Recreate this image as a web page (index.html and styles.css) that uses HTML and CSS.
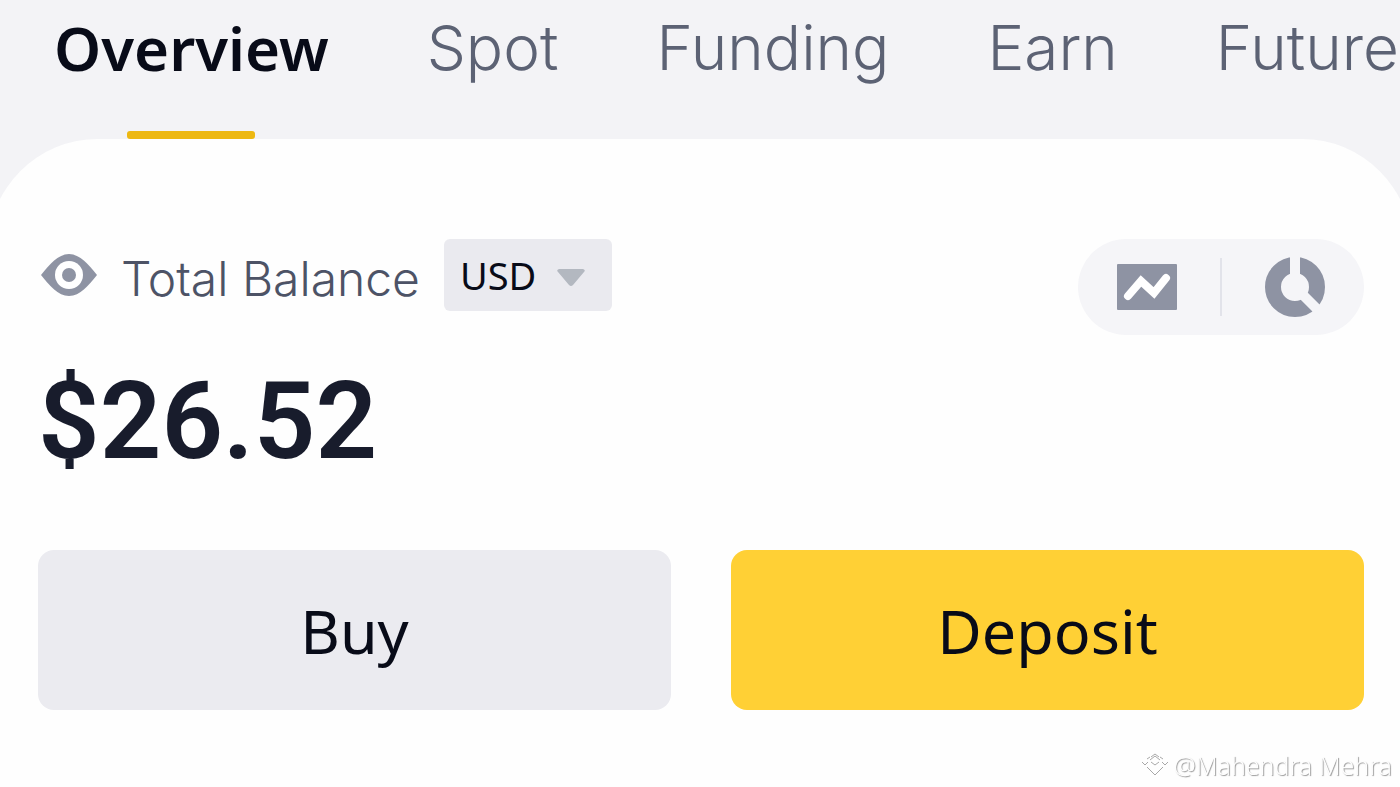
FILE: index.html
```
<!DOCTYPE html>
<html lang="en">
<head>
    <meta charset="UTF-8">
    <meta name="viewport" content="width=device-width, initial-scale=1.0">
    <title>Wallet Overview</title>
    <link rel="stylesheet" href="styles.css">
</head>
<body>
    <nav class="tabs">
        <a href="#overview" class="tab active">Overview</a>
        <a href="#spot" class="tab">Spot</a>
        <a href="#funding" class="tab">Funding</a>
        <a href="#earn" class="tab">Earn</a>
        <a href="#futures" class="tab">Futures</a>
    </nav>

    <main class="panel">
        <div class="balance-row">
            <div class="balance-label">
                <svg class="eye" viewBox="0 0 56 42" aria-hidden="true">
                    <path d="M0 21C8 11 17 0 28 0s20 11 28 21C48 31 39 42 28 42S8 31 0 21z" fill="#8e93a3"/>
                    <circle cx="28" cy="21" r="14" fill="#fff"/>
                    <circle cx="28" cy="21" r="7" fill="#8e93a3"/>
                </svg>
                <label for="currency">Total Balance</label>
                <div class="currency">
                    <select id="currency">
                        <option>USD</option>
                    </select>
                    <svg class="arrow" viewBox="0 0 28 18" aria-hidden="true">
                        <path d="M2 0h24q3 1 1 3L16 16q-2 2-4 0L1 3q-2-2 1-3z" fill="#b3b8c0"/>
                    </svg>
                </div>
            </div>
            <div class="view-switch">
                <button type="button" aria-label="Chart">
                    <svg width="60" height="60" viewBox="0 0 60 60">
                        <rect y="7" width="60" height="46" rx="1" fill="#8e93a3"/>
                        <path d="M11 39L24 24L37 36L49 21" fill="none" stroke="#fff" stroke-width="8" stroke-linecap="round"/>
                    </svg>
                </button>
                <span class="divider"></span>
                <button type="button" aria-label="Allocation">
                    <svg width="60" height="60" viewBox="0 0 60 60">
                        <circle cx="30" cy="30" r="22" fill="none" stroke="#8e93a3" stroke-width="16"/>
                        <path d="M30 30V0M30 30L52 52" fill="none" stroke="#f5f5f8" stroke-width="10"/>
                    </svg>
                </button>
            </div>
        </div>

        <div class="amount">$26.52</div>

        <div class="actions">
            <button type="button" class="btn">Buy</button>
            <button type="button" class="btn primary">Deposit</button>
        </div>
    </main>

    <div class="watermark">
        <svg width="28" height="24" viewBox="0 0 28 24" fill="none" stroke="#a8a8a8" aria-hidden="true">
            <path d="M6 6l3-2M10 4l4-3 4 3M19 4l3 2M9 7l5-4 5 4M1 9l3 3 3-3M10 9l4 3 4-3M21 9l3 3 3-3M6 14l8 8 8-8"/>
        </svg>
        <span>@Mahendra Mehra</span>
    </div>
</body>
</html>
```
FILE: styles.css
```
* {
    box-sizing: border-box;
}
body {
    margin: 0;
    min-height: 100vh;
    font-family: "Noto Sans", sans-serif;
    background-color: #f3f3f6;
    color: #080b18;
    overflow: hidden;
    display: flex;
    flex-direction: column;
}
button, select {
    font-family: inherit;
    color: inherit;
    border: none;
    cursor: pointer;
}
.tabs {
    display: flex;
    gap: 98px;
    padding-left: 54px;
}
.tab {
    position: relative;
    flex: none;
    padding: 18px 0 61px;
    font-family: Inter, sans-serif;
    font-size: 62px;
    line-height: 60px;
    font-weight: 300;
    color: #5c6274;
    text-decoration: none;
}
.tab.active {
    font-family: "Noto Sans", sans-serif;
    font-size: 60px;
    font-weight: 600;
    color: #080b18;
}
.tab.active::after {
    content: "";
    position: absolute;
    left: 50%;
    bottom: 0;
    width: 128px;
    height: 8px;
    margin-left: -64px;
    border-radius: 3px;
    background-color: #edb812;
}
.panel {
    flex: 1;
    margin: 0 -12px;
    padding: 100px 48px 76px 50px;
    border-radius: 110px 110px 0 0;
    background-color: #fefefe;
}
.balance-row {
    display: flex;
    justify-content: space-between;
    align-items: flex-start;
}
.balance-label {
    display: flex;
    align-items: center;
    gap: 24px;
    padding-left: 3px;
    font-family: Inter, sans-serif;
    font-size: 48px;
    line-height: 64px;
    font-weight: 300;
    color: #4d5366;
}
.balance-label label {
    padding-top: 8px;
}
.eye {
    width: 56px;
    height: 42px;
}
.currency {
    position: relative;
    display: flex;
}
.currency select {
    appearance: none;
    width: 168px;
    height: 72px;
    padding: 0 0 0 16px;
    border-radius: 6px;
    background-color: #eaeaef;
    color: #080b18;
    font-family: "Noto Sans", sans-serif;
    font-size: 38px;
}
.arrow {
    position: absolute;
    right: 27px;
    top: 30px;
    width: 28px;
    height: 18px;
    pointer-events: none;
}
.view-switch {
    display: flex;
    align-items: center;
    justify-content: space-between;
    width: 286px;
    height: 96px;
    padding: 0 39px;
    border-radius: 48px;
    background-color: #f5f5f8;
}
.view-switch button {
    display: flex;
    padding: 0;
    background: none;
}
.divider {
    width: 2px;
    height: 58px;
    background-color: #e2e3ea;
}
.amount {
    margin-top: 22px;
    font-family: Roboto, sans-serif;
    font-size: 108px;
    line-height: 128px;
    font-weight: 600;
    color: #181c2c;
}
.actions {
    display: grid;
    grid-template-columns: 1fr 1fr;
    gap: 60px;
    margin-top: 65px;
}
.btn {
    height: 160px;
    border-radius: 16px;
    background-color: #ebebf0;
    font-size: 61px;
}
.btn.primary {
    background-color: #ffd035;
}
.watermark {
    position: fixed;
    right: 8px;
    bottom: 6px;
    display: flex;
    align-items: center;
    gap: 4px;
    font-size: 25px;
    line-height: 32px;
    font-weight: 300;
    color: #fefefe;
    text-shadow: 1px 1px 1px #999;
}
```
